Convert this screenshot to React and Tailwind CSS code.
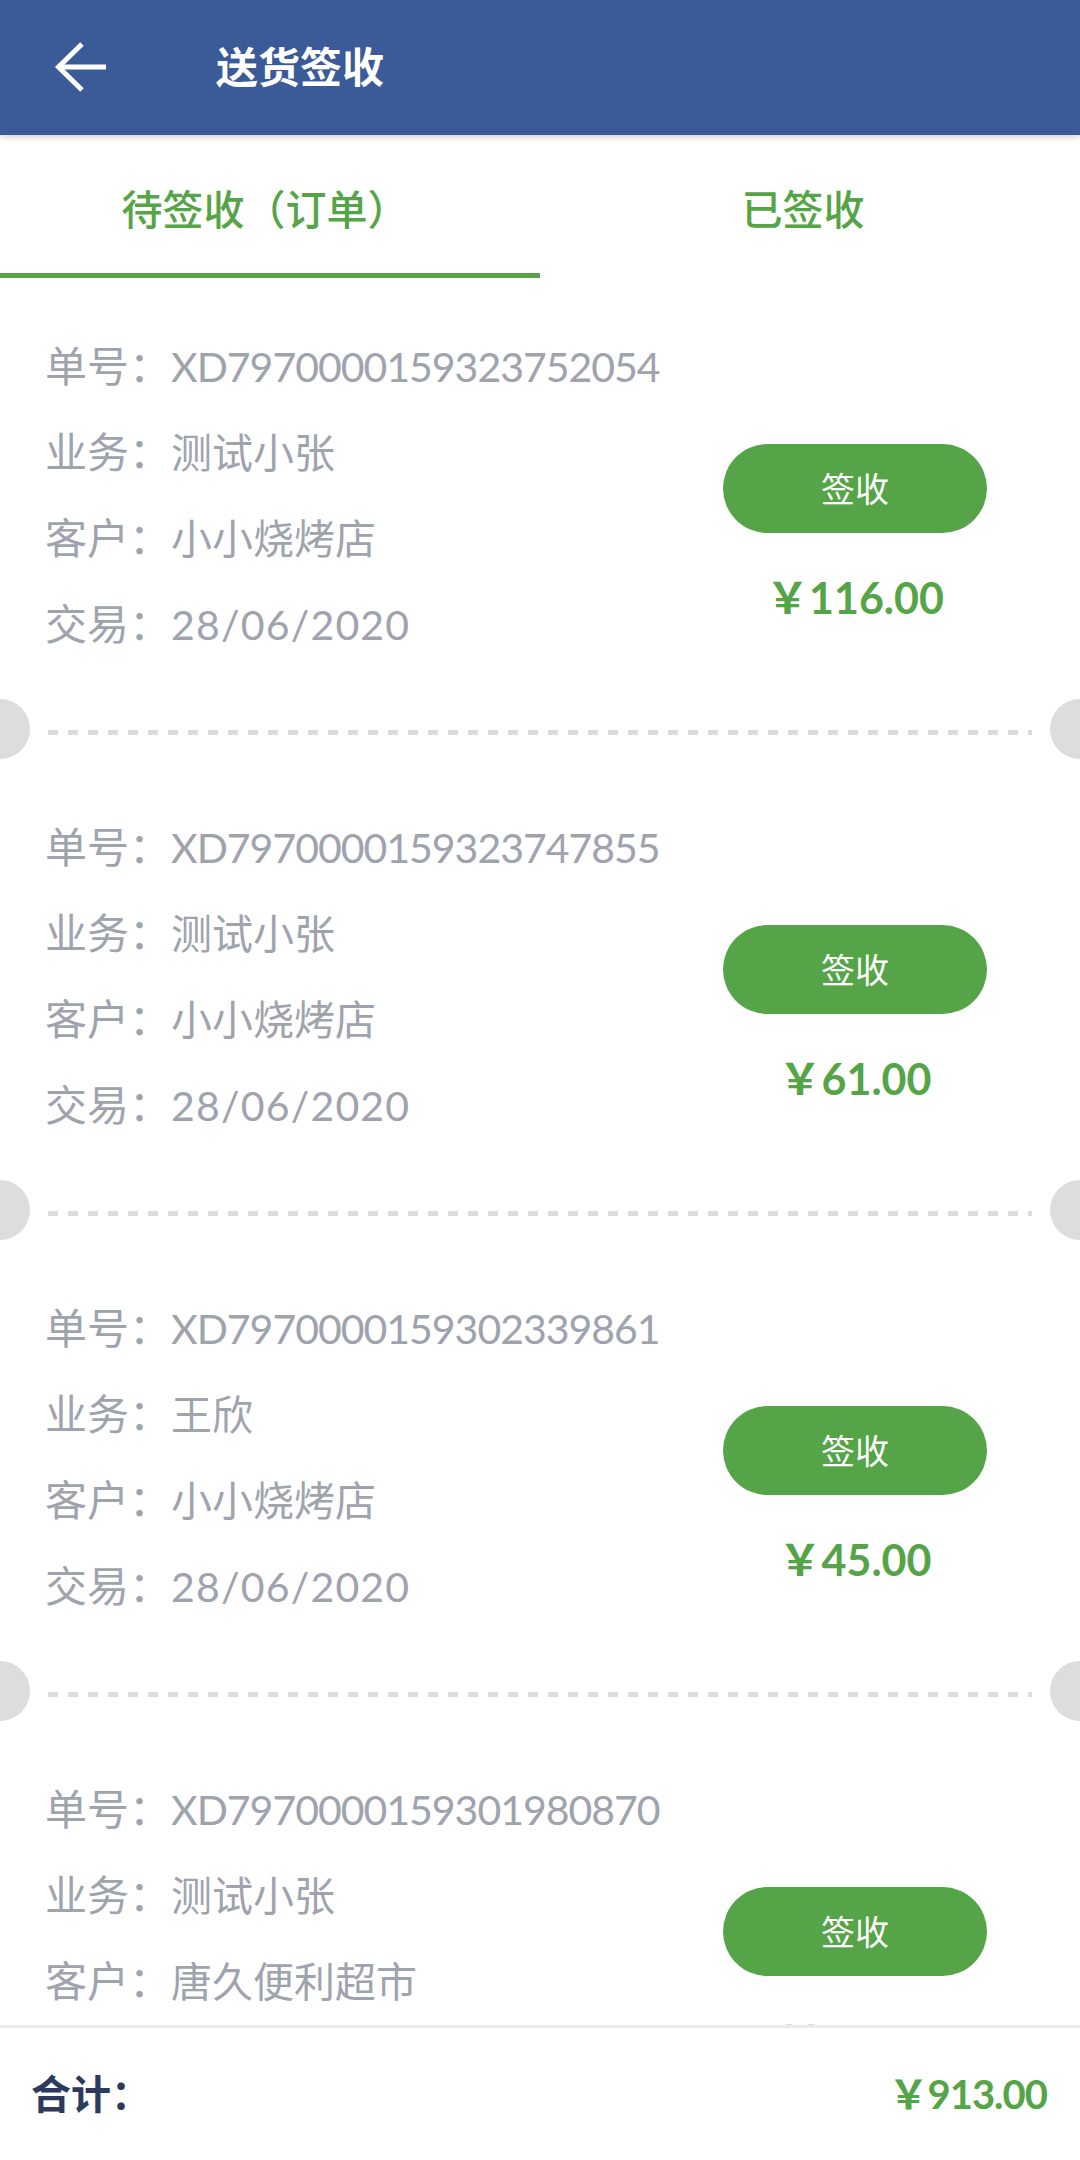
import React from "react";

const orders = [
  { no: "XD7970000159323752054", sales: "测试小张", customer: "小小烧烤店", date: "28/06/2020", amount: "116.00" },
  { no: "XD7970000159323747855", sales: "测试小张", customer: "小小烧烤店", date: "28/06/2020", amount: "61.00" },
  { no: "XD7970000159302339861", sales: "王欣", customer: "小小烧烤店", date: "28/06/2020", amount: "45.00" },
  { no: "XD7970000159301980870", sales: "测试小张", customer: "唐久便利超市", date: "28/06/2020", amount: "14.00" },
];

const FONT = "font-['Lato','Noto_Sans_CJK_SC',sans-serif]";

function Row({ label, value, vClass = "" }) {
  return (
    <div className="h-[86px] leading-[86px] whitespace-nowrap text-[#9ea3ad]">
      <span className="text-[42px]">{label}：</span>
      <span className={`text-[41px] ${vClass}`}>{value}</span>
    </div>
  );
}

function Divider() {
  return (
    <div className="relative h-[60px] w-full">
      <div className="absolute left-[-30px] top-0 h-[60px] w-[60px] rounded-full bg-[#dddddd]" />
      <div className="absolute right-[-30px] top-0 h-[60px] w-[60px] rounded-full bg-[#dddddd]" />
      <div className="absolute left-[48px] top-[31px] h-[5px] w-[984px] bg-[repeating-linear-gradient(90deg,#dcdcdc_0px,#dcdcdc_10px,transparent_10px,transparent_20px)]" />
    </div>
  );
}

function Card({ o }) {
  return (
    <div>
      <div className="flex h-[421px] justify-between">
        <div className="pl-[45px] pt-[45px]">
          <Row label="单号" value={o.no} vClass="tracking-[-1px]" />
          <Row label="业务" value={o.sales} />
          <Row label="客户" value={o.customer} />
          <Row label="交易" value={o.date} vClass="tracking-[1.2px]" />
        </div>
        <div className="mr-[93px] flex w-[264px] flex-col items-center pt-[166px]">
          <div className="flex h-[89px] w-[264px] items-center justify-center rounded-full bg-[#55a447] text-[34px] text-white">
            签收
          </div>
          <div className="mt-[40px] h-[50px] leading-[50px] whitespace-nowrap text-[43px] font-bold text-[#55a447]">
            ￥{o.amount}
          </div>
        </div>
      </div>
      <Divider />
    </div>
  );
}

export default function App() {
  return (
    <div className={`flex h-[2160px] w-[1080px] flex-col overflow-hidden bg-white ${FONT}`}>
      <div className="relative z-10 flex h-[135px] shrink-0 items-center bg-[#3b5a98] shadow-[0_2px_6px_rgba(0,0,0,0.18)]">
        <svg className="absolute left-[52px] top-[37px]" width="60" height="60" viewBox="0 0 60 60">
          <path d="M30 7 L6.5 30 L30 53" fill="none" stroke="white" strokeWidth="5" strokeLinejoin="miter" />
          <path d="M7 30 H54" fill="none" stroke="white" strokeWidth="5" />
        </svg>
        <div className="ml-[216px] text-[42px] font-bold text-white">送货签收</div>
      </div>

      <div className="flex h-[143px] shrink-0 bg-white">
        <div className="relative flex w-[540px] items-center justify-center pr-[10px] pt-[6px] text-[41px] font-medium text-[#55a447]">
          待签收（订单）
          <div className="absolute bottom-0 left-0 h-[5px] w-[540px] bg-[#55a447]" />
        </div>
        <div className="flex w-[540px] items-center justify-center pr-[14px] pt-[6px] text-[41px] font-medium text-[#55a447]">
          已签收
        </div>
      </div>

      <div className="relative flex-1 overflow-hidden">
        {orders.map((o) => (
          <Card key={o.no} o={o} />
        ))}
      </div>

      <div className="flex h-[135px] shrink-0 items-center justify-between border-t-[3px] border-[#e9e9ee] bg-white pl-[31px] pr-[33px]">
        <div className="text-[40px] font-bold text-[#2d3a5c]">合计：</div>
        <div className="text-[40px] font-bold tracking-[-1px] text-[#55a447]">￥913.00</div>
      </div>
    </div>
  );
}
